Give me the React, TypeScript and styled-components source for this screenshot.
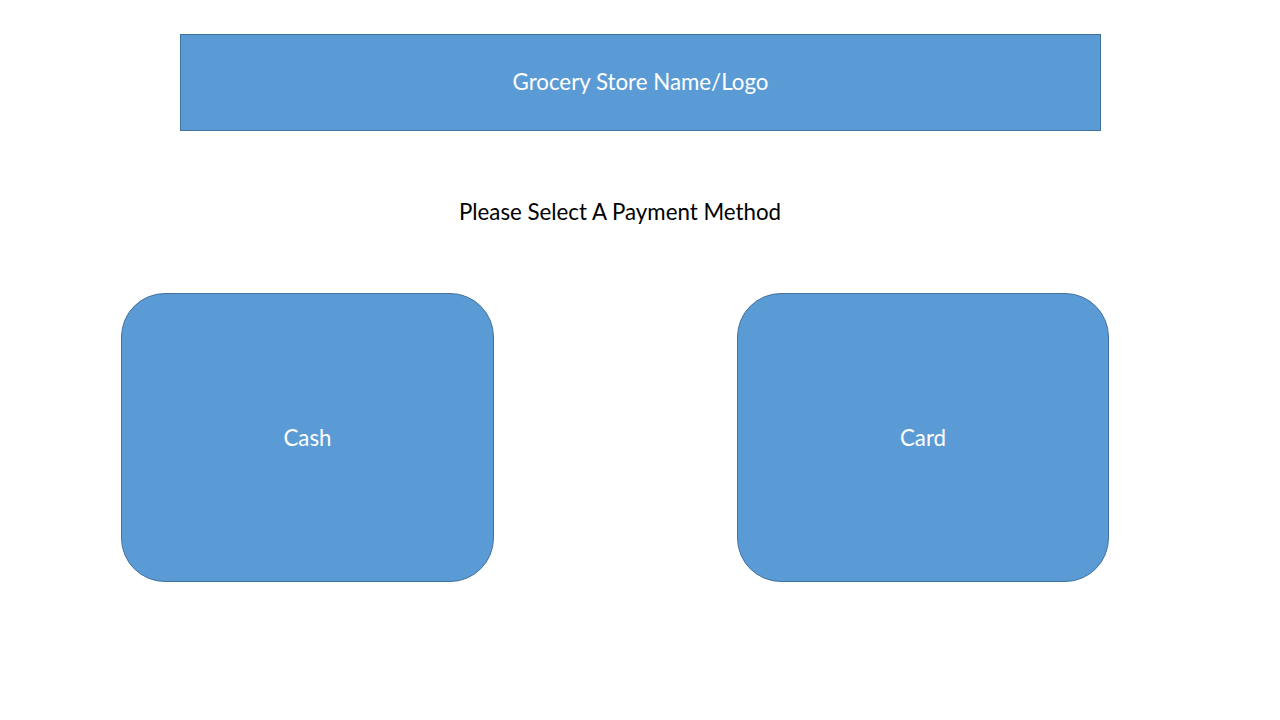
import React from "react";
import styled, { createGlobalStyle } from "styled-components";

const Global = createGlobalStyle`
  html, body { margin: 0; padding: 0; background: #ffffff; }
  body { font-family: Lato, "Open Sans", sans-serif; }
`;

const Page = styled.div`
  width: 1280px;
  height: 720px;
  display: flex;
  flex-direction: column;
  padding-top: 34px;
  box-sizing: border-box;
`;

const Banner = styled.header`
  margin-left: 180px;
  width: 921px;
  height: 97px;
  box-sizing: border-box;
  background: #5b9bd5;
  border: 1px solid #41719c;
  display: flex;
  align-items: center;
  justify-content: center;
  color: #ffffff;
  font-size: 22.3px;
  padding-bottom: 3px;
`;

const Prompt = styled.h1`
  margin: 68px 0 0 0;
  width: 1240px;
  text-align: center;
  font-weight: 400;
  font-size: 22.3px;
  line-height: 26px;
  color: #000000;
`;

const Options = styled.div`
  display: flex;
  gap: 243px;
  margin-top: 68px;
  padding-left: 121px;
`;

const Option = styled.button<{ $w: number }>`
  width: ${(p) => p.$w}px;
  height: 289px;
  box-sizing: border-box;
  background: #5b9bd5;
  border: 1px solid #41719c;
  border-radius: 44px;
  color: #ffffff;
  font-family: inherit;
  font-size: 22.3px;
  display: flex;
  align-items: center;
  justify-content: center;
  padding: 0;
  cursor: pointer;
`;

export default function App() {
  return (
    <>
      <Global />
      <Page>
        <Banner>Grocery Store Name/Logo</Banner>
        <Prompt>Please Select A Payment Method</Prompt>
        <Options>
          <Option $w={373}>Cash</Option>
          <Option $w={372}>Card</Option>
        </Options>
      </Page>
    </>
  );
}
